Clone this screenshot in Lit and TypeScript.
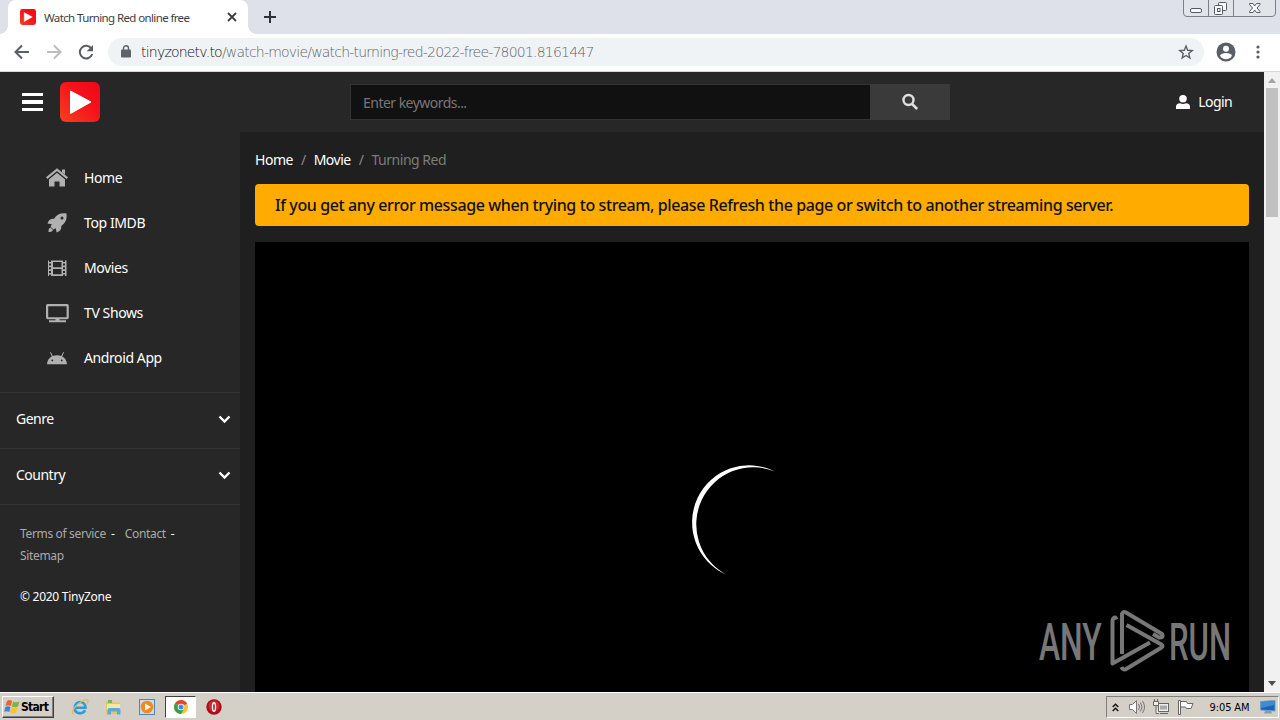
import { LitElement, css, html, svg } from "lit";
import { customElement } from "lit/decorators.js";

const NAV_ITEMS = [
  {
    label: "Home",
    icon: svg`<path d="M4 13 12 6.500l8 6.500V20.500h-5.500v-5h-5v5H4z"/><path d="M1.800 12.500 12 4l10.200 8.500" fill="none" stroke="#272727" stroke-width="4.200"/><path d="M1.700 12.200 12 3.700l10.300 8.500" fill="none" stroke="#b0b0b0" stroke-width="2.200"/><path d="M17 3.600h3v5l-3-2.400z"/>`,
  },
  {
    label: "Top IMDB",
    icon: svg`<path d="M21.500 2.500c.7 6-1 9.400-5.200 12.500.2 3.600-1.300 5.500-4.700 6.600l-.8-4.400-2.400 1.300-2.800-2.800 1.200-2.400-4.400-.8c1-3.400 3-5 6.600-4.800C12 3.600 15.500 1.800 21.500 2.500z"/><path d="M5.500 16.500c-1.900.8-2 2.600-2 4.500 1.900 0 3.800-.2 4.500-2z"/><circle cx="17" cy="7" r="1.500" fill="#272727"/>`,
  },
  {
    label: "Movies",
    icon: svg`<path fill-rule="evenodd" d="M3 4.500h1V6h2V4.500h12V6h2V4.500h1.500V20H20v-1.500h-2V20H6v-1.500H4V20H3zM4 7.500v2h2v-2zm0 3.700v2h2v-2zm0 3.700v2h2v-2zM18 7.500v2h2v-2zm0 3.700v2h2v-2zm0 3.700v2h2v-2zM8 6v5.300h8.500V6zm0 7v5.300h8.500V13z"/>`,
  },
  {
    label: "TV Shows",
    icon: svg`<path fill-rule="evenodd" d="M2.500 3h19.500a1.800 1.800 0 0 1 1.800 1.800v11.700A1.800 1.800 0 0 1 22 18.300H2.800A1.800 1.800 0 0 1 1 16.500V4.800A1.800 1.800 0 0 1 2.500 3zm.7 2.200v11h18.400v-11z"/><path d="M10.500 18h4v1.200H21V21.200H4v-2h6.500z"/>`,
  },
  {
    label: "Android App",
    icon: svg`<path fill-rule="evenodd" d="M2 18.300c.2-3.600 2-6.300 4.800-7.800L5 6.300l.8-.4 2 4.200c2.800-1.200 5.700-1.200 8.400 0l2-4.200.8.400-1.800 4.200c2.800 1.500 4.600 4.200 4.800 7.800zm5.300-4.800a.9.900 0 1 0 0 1.800.9.900 0 0 0 0-1.800zm9.400 0a.9.900 0 1 0 0 1.800.9.900 0 0 0 0-1.800z"/>`,
  },
];

const playLogo = (size: number) => html`
  <svg width=${size} height=${size} viewBox="0 0 40 40">
    <defs>
      <linearGradient id="logo" x1="0" y1="1" x2="1" y2="0">
        <stop offset="0" stop-color="#f8401c"></stop>
        <stop offset=".6" stop-color="#f6101c"></stop>
        <stop offset="1" stop-color="#ee0818"></stop>
      </linearGradient>
    </defs>
    <rect width="40" height="40" rx="6" fill="url(#logo)"></rect>
    <path d="M10.500 9v22.500L31 20z" fill="#fff" stroke="#fff" stroke-linejoin="round"></path>
  </svg>
`;

@customElement("browser-chrome")
export class BrowserChrome extends LitElement {
  override render() {
    return html`
      <div class="tabs">
        <div class="tab">
          ${playLogo(16)}
          <span class="title">Watch Turning Red online free</span>
          <svg width="10" height="10" viewBox="0 0 10 10"><path d="m1 1 8 8M9 1 1 9" stroke="#3c4043" stroke-width="1.800"/></svg>
        </div>
        <svg class="new-tab" width="12" height="12" viewBox="0 0 12 12"><path d="M6 0v12M0 6h12" stroke="#2c3038" stroke-width="2"/></svg>
        <svg class="window-buttons" width="94" height="18" viewBox="0 0 94 18" fill="none" stroke="#7b8088">
          <path d="M.5 0v13q0 3.500 3.500 3.500h85q3.500 0 3.500-3.500V0M25.500 0v16M50.500 0v16" fill="#e1e4e9"/>
          <rect x="7.500" y="8.500" width="11" height="4" rx="1.500" stroke="#555b66" fill="#f8f9fb"/>
          <g stroke="#555b66" fill="#f8f9fb"><rect x="35.500" y="2.500" width="8" height="8" rx="1"/><rect x="31.500" y="5.500" width="8" height="9" rx="1"/><rect x="34.500" y="8.500" width="2.500" height="3"/></g>
          <path d="M66.500 3.500h3.500l1.700 2.500 1.800-2.500h3.500v1L74 8l3 3.500v1h-3.500L71.700 10 70 12.500h-3.500v-1l3-3.500-3-3.500z" stroke="#555b66" fill="#f8f9fb"/>
        </svg>
      </div>
      <div class="toolbar">
        <svg class="nav" width="16" height="16" viewBox="0 0 16 16" fill="none" stroke="#5a5e63" stroke-width="2"><path d="M15 8H2M8 1.500 1.500 8 8 14.500"/></svg>
        <svg class="nav" width="16" height="16" viewBox="0 0 16 16" fill="none" stroke="#babcbe" stroke-width="2"><path d="M1 8h13M8 1.500 14.500 8 8 14.500"/></svg>
        <svg class="nav" width="16" height="16" viewBox="0 0 16 16"><path d="M13.400 4.600A6.300 6.300 0 1 0 14.200 10" fill="none" stroke="#5a5e63" stroke-width="2"/><path d="M15 1v6.300H8.700z" fill="#5a5e63"/></svg>
        <div class="address">
          <svg width="10" height="13" viewBox="0 0 10 13"><rect y="4.500" width="10" height="8" rx="1" fill="#5f6368"/><path d="M2.500 5V3.200a2.500 2.500 0 0 1 5 0V5" fill="none" stroke="#5f6368" stroke-width="1.400"/></svg>
          <span class="url"><b>tinyzonetv.to</b>/watch-movie/watch-turning-red-2022-free-78001.8161447</span>
          <svg width="16" height="16" viewBox="0 0 24 24"><path d="m12 3 2.500 6.400 6.900.5-5.300 4.400 1.700 6.700-5.800-3.700L6.200 21l1.700-6.700-5.300-4.400 6.900-.5z" fill="none" stroke="#5a5e63" stroke-width="2"/></svg>
        </div>
        <svg class="profile" width="20" height="20" viewBox="0 0 20 20"><circle cx="10" cy="10" r="9.500" fill="#5a5e66"/><circle cx="10" cy="6.700" r="3" fill="#fff"/><path d="M4 13.800c1-3.700 11-3.700 12 0a7 7 0 0 1-12 0z" fill="#fff"/></svg>
        <svg width="4" height="14" viewBox="0 0 4 14" fill="#5a5e63"><circle cx="2" cy="2" r="1.600"/><circle cx="2" cy="7" r="1.600"/><circle cx="2" cy="12" r="1.600"/></svg>
      </div>
    `;
  }

  static override styles = css`
    :host { display: block; height: 72px; font-family: "Liberation Sans", sans-serif; }
    svg { display: block; flex: none; }
    .tabs { display: flex; height: 34px; background: #dee1e9; }
    .tab {
      position: relative;
      display: flex; align-items: center;
      box-sizing: border-box;
      width: 240px; margin-left: 8px; padding: 0 11px 0 12px;
      background: #fff;
      border-radius: 8px 8px 0 0;
    }
    /* outward curves at the tab's feet */
    .tab::before, .tab::after {
      content: "";
      position: absolute; bottom: 0;
      width: 8px; height: 8px;
    }
    .tab::before { left: -8px; background: radial-gradient(circle at 0 0, transparent 7.500px, #fff 8px); }
    .tab::after { right: -8px; background: radial-gradient(circle at 100% 0, transparent 7.500px, #fff 8px); }
    .title { flex: 1; margin-left: 8px; font: 11.500px "Noto Sans", sans-serif; letter-spacing: -.62px; white-space: nowrap; color: #3c4043; }
    .new-tab { margin: 11px 0 0 16px; }
    .window-buttons { margin: 0 3px 0 auto; }

    .toolbar {
      display: flex; align-items: center;
      box-sizing: border-box;
      height: 38px; padding: 0 20px 2px 14px;
      background: #fff;
      border-bottom: 1px solid #d5d7da;
    }
    .nav { margin-right: 16px; }
    .nav:nth-child(3) { margin-right: 14px; }
    .address {
      display: flex; flex: 1; align-items: center;
      box-sizing: border-box;
      height: 28px; padding: 0 10px 0 13px;
      border-radius: 14px;
      background: #f0f3f5;
    }
    .url { flex: 1; margin-left: 10px; font: 14px "DejaVu Sans", sans-serif; font-weight: 200; letter-spacing: -.79px; white-space: nowrap; color: #5f6368; }
    .url b { font-weight: inherit; color: #101114; }
    .profile { margin: 0 20px 0 12px; }
  `;
}

@customElement("site-header")
export class SiteHeader extends LitElement {
  override render() {
    return html`
      <div class="burger"><i></i><i></i><i></i></div>
      ${playLogo(40)}
      <div class="search">
        <span class="field">Enter keywords...</span>
        <span class="submit">
          <svg width="18" height="18" viewBox="0 0 18 18" fill="none" stroke="#e0e0e0"><circle cx="7.500" cy="7" r="5" stroke-width="2.400"/><path d="m11 10.800 5.200 5.200" stroke-width="2.600"/></svg>
        </span>
      </div>
      <div class="login">
        <svg width="14" height="14" viewBox="0 0 14 14" fill="#fff"><ellipse cx="7" cy="3.700" rx="3.800" ry="3.700"/><path d="M0 14v-2.200C0 9.500 1.500 8.500 4 8.200c2 1 4 1 6 0 2.500.3 4 1.300 4 3.600V14z"/></svg>
        <span>Login</span>
      </div>
    `;
  }

  static override styles = css`
    :host {
      display: flex; align-items: center;
      box-sizing: border-box;
      height: 60px; padding: 0 32px 0 22px;
      background: #272727;
      font: 14px "Noto Sans", sans-serif;
      color: #fff;
    }
    svg { flex: none; }
    .burger { display: flex; flex-direction: column; gap: 4px; width: 21px; margin-right: 17px; }
    .burger i { height: 3px; background: #fff; }
    .burger i:nth-child(2) { height: 4px; }
    .search { display: flex; width: 600px; height: 36px; margin-left: 250px; }
    .field {
      flex: 1;
      box-sizing: border-box;
      padding-left: 12px;
      border: 1px solid #343434; border-right: 0;
      background: #111;
      color: #77777a;
      line-height: 36px;
      letter-spacing: -.53px;
    }
    .submit { display: flex; align-items: center; justify-content: center; width: 80px; background: #3a3a3a; }
    .login { display: flex; align-items: center; gap: 8px; margin-left: auto; }
    .login span { margin-top: -1px; letter-spacing: -.6px; }
  `;
}

@customElement("site-sidebar")
export class SiteSidebar extends LitElement {
  override render() {
    return html`
      <nav>
        ${NAV_ITEMS.map((item) => html`
          <a><svg width="24" height="24" viewBox="0 0 24 24" fill="#b0b0b0">${item.icon}</svg><span>${item.label}</span></a>
        `)}
      </nav>
      ${["Genre", "Country"].map((name) => html`
        <div class="group">
          <span>${name}</span>
          <svg width="13" height="9" viewBox="0 0 13 9"><path d="m1.500 1.500 5 5 5-5" fill="none" stroke="#fff" stroke-width="2.300"/></svg>
        </div>
      `)}
      <footer>
        <div class="links"><span>Terms of service</span><i>-</i><span>Contact</span><i>-</i><br><span>Sitemap</span></div>
        <div class="copyright">© 2020 TinyZone</div>
      </footer>
    `;
  }

  static override styles = css`
    :host { display: block; width: 240px; flex: none; background: #272727; font: 14px "Noto Sans", sans-serif; color: #fff; }
    nav { padding: 23px 0 12px; border-bottom: 1px solid #333; }
    a { display: flex; align-items: center; height: 45px; padding-left: 45px; }
    a span { margin-left: 15px; letter-spacing: -.4px; }
    .group {
      display: flex; align-items: center; justify-content: space-between;
      height: 55px; padding: 0 9px 0 16px;
      border-bottom: 1px solid #333;
      letter-spacing: -.5px;
    }
    .group span { margin-top: -4px; }
    .group svg { margin-top: -2px; }
    footer { padding: 18px 20px; font-size: 12px; line-height: 22px; }
    .links span { color: #aaa; letter-spacing: -.34px; }
    .links i { margin: 0 10px 0 5px; font-style: normal; }
    .copyright { margin-top: 19px; letter-spacing: -.27px; }
  `;
}

@customElement("watch-page")
export class WatchPage extends LitElement {
  override render() {
    return html`
      <div class="crumbs"><span>Home</span><i>/</i><span>Movie</span><i>/</i><em>Turning Red</em></div>
      <div class="notice">If you get any error message when trying to stream, please Refresh the page or switch to another streaming server.</div>
      <div class="player">
        <svg class="spinner" width="120" height="120" viewBox="690 463 120 120"><path d="M775 471.500A57.050 57.050 0 1 0 726 574.500A57.120 57.120 0 0 1 775 471.500z" fill="#fff"/></svg>
        <svg class="watermark" width="200" height="70" viewBox="1035 606 200 70">
          <g fill="#777" font-family="Roboto, sans-serif" font-size="51" font-weight="500">
            <text transform="translate(1039 659.500) scale(.64 1)" textLength="98" lengthAdjust="spacingAndGlyphs">ANY</text>
            <text transform="translate(1169 659.500) scale(.64 1)" textLength="97" lengthAdjust="spacingAndGlyphs">RUN</text>
          </g>
          <g fill="none" stroke="#777" stroke-width="4" stroke-linejoin="round">
            <path d="M1116.500 619.500q-1-3-2.800-1.500-1.200 1-1.200 3V663.500l37.500-21"/>
            <path d="M1122 654v-40q1-3 4-1.500l36 21.500q2 4-3 3.500l-6-3.500"/>
            <path d="m1126.500 625 35 19.500q2 1.500 0 3L1127 668.500q-4 2.500-5.500-1.500"/>
          </g>
        </svg>
      </div>
    `;
  }

  static override styles = css`
    :host {
      display: flex; flex-direction: column; flex: 1;
      box-sizing: border-box;
      padding: 17px 15px 0;
      background: #1f1f1f;
      font: 14px "Noto Sans", sans-serif;
      color: #fff;
    }
    .crumbs { height: 35px; line-height: 22px; letter-spacing: -.48px; }
    .crumbs i { margin: 0 8px; font-style: normal; color: #888; }
    .crumbs em { font-style: normal; color: #7c7c7c; }
    .notice {
      height: 42px; padding: 0 20px; margin-bottom: 16px;
      border-radius: 4px;
      background: #ffab00;
      color: #111;
      font-size: 16px; font-weight: 500; line-height: 42px; letter-spacing: -.39px;
      white-space: nowrap;
    }
    .player { position: relative; flex: 1; background: #000; }
    .spinner { position: absolute; left: 435px; top: 221px; }
    .watermark { position: absolute; left: 780px; top: 364px; }
  `;
}

@customElement("task-bar")
export class TaskBar extends LitElement {
  override render() {
    return html`
      <div class="start">
        <svg width="17" height="16" viewBox="0 0 17 16"><path d="M3 2c2-1.500 3.500-1 5 0L6.800 7C5 6 3.500 6 1.500 7z" fill="#e8642a"/><path d="M9 2.500c2 1 4 1 6.500 0L14 7.500c-2 1-4 1-6.200 0z" fill="#7fb53b"/><path d="M1.300 8c2-1 3.500-1 5.200 0l-1.200 5c-2-1-3.500-1-5 0z" fill="#3b86d2"/><path d="M7.500 8.500c2 1 4 1 6.200 0l-1.500 5c-2 1-4 1-6 0z" fill="#fbc02d"/></svg>
        <span>Start</span>
      </div>
      <svg class="ie" width="18" height="18" viewBox="0 0 18 18" fill="none"><path d="M4.200 9.700h10.300c0-7.700-10.700-7.500-10.700.2 0 6.600 8.200 6.600 10.200 2.300" stroke="#2e9bdc" stroke-width="2.600"/><path d="M2.500 16.500C-1.500 13 8 3 16 1.500c1.500.5 1 2.500.3 4" stroke="#e9b93c" stroke-width="1.200"/></svg>
      <svg class="explorer" width="17" height="16" viewBox="0 0 17 16"><path d="M1 2h6l1 1.500h7V15H1z" fill="#e4c765"/><path d="M3 1h4v3H3z" fill="#74b959"/><path d="M2 5h13v6H2z" fill="#f8e6a2"/><path d="M2.500 15.500V11q0-2 2-2h9q2 0 2 2v4.500H12v-3H6v3z" fill="#5aabd6"/></svg>
      <svg class="media" width="16" height="16" viewBox="0 0 16 16"><rect x=".5" y=".5" width="15" height="15" fill="#c4ddf3" stroke="#4c87bd"/><circle cx="8" cy="8" r="6.300" fill="#f18a1c"/><path d="M6 4.500v7L12 8z" fill="#fff"/></svg>
      <div class="active">
        <svg width="14" height="14" viewBox="0 0 14 14"><circle cx="7" cy="7" r="7" fill="#f6c32c"/><path d="M7 7 .94 3.500a7 7 0 0 1 12.120 0z" fill="#e14335"/><path d="M.94 3.500A7 7 0 0 0 7 14l3-5.300L7 7z" fill="#2da14c"/><circle cx="7" cy="7" r="3.300" fill="#fff"/><circle cx="7" cy="7" r="2.500" fill="#4285f4"/></svg>
      </div>
      <svg class="opera" width="16" height="16" viewBox="0 0 16 16"><ellipse cx="8" cy="8" rx="7.700" ry="7.700" fill="#a80f18"/><ellipse cx="8" cy="7" rx="5.500" ry="5.500" fill="#cc2a32"/><ellipse cx="8" cy="8" rx="2.200" ry="5" fill="#fff"/><ellipse cx="8" cy="8" rx=".8" ry="3.500" fill="#a80f18"/></svg>
      <div class="tray">
        <svg width="7" height="9" viewBox="0 0 7 9" fill="none" stroke="#111" stroke-width="1.400"><path d="m.7 4 2.800-2.800L6.300 4M.7 8l2.800-2.800L6.300 8"/></svg>
        <svg class="sound" width="16" height="14" viewBox="0 0 16 14" fill="#fff" stroke="#777"><path d="M.5 4.500h3l4-4v13l-4-4h-3z"/><path d="M9.500 4q2 3 0 6M11.500 2.500q3 4.500 0 9M13.500 1q4 6 0 12" fill="none"/></svg>
        <svg class="network" width="17" height="16" viewBox="0 0 17 16" fill="#eee" stroke="#666"><rect x="5.500" y="4.500" width="10" height="8"/><path d="M7 6.500h7v4H7z" fill="#aaa" stroke="none"/><path d="M.5 2.500h5v4h-5zM1.500 0v2M4.500 0v2M3 7v7.500h3M7 14.500h8"/></svg>
        <svg class="flag" width="16" height="16" viewBox="0 0 16 16" fill="#fff" stroke="#666"><path d="M.5 1.500h2v14h-2z"/><path d="M2.500 2.500h6l1 2h5.500l-2 5H8.500l-1-1.500h-5z"/></svg>
        <time>9:05 AM</time>
        <svg width="16" height="14" viewBox="0 0 16 14"><path d="M.5 1.500 15 .5V11L.5 10z" fill="#1764b4" stroke="#6f9fc9"/><path d="M1 2 14 1v4L1 8z" fill="#438bd0"/><path d="M5 11h6l1 2.500H4z" fill="#8b9aa8"/></svg>
      </div>
    `;
  }

  static override styles = css`
    :host {
      display: flex; align-items: center;
      box-sizing: border-box;
      height: 28px; padding: 1px 1px 0 2px;
      background: #d4d0c8;
      border-top: 1px solid #fff;
      font-family: "DejaVu Sans Condensed", "DejaVu Sans", sans-serif;
    }
    svg { display: block; flex: none; }
    .start {
      display: flex; align-items: center;
      box-sizing: border-box;
      width: 52px; height: 22px; padding-left: 1px;
      border: 1px solid; border-color: #fff #404040 #404040 #fff;
      box-shadow: inset -1px -1px #808080;
      font: bold 12px "DejaVu Sans Condensed", "DejaVu Sans", sans-serif;
      letter-spacing: -.7px;
    }
    .ie { margin-left: 17px; }
    .explorer { margin-left: 16px; }
    .media { margin-left: 17px; }
    .active {
      display: flex; align-items: center; justify-content: center;
      box-sizing: border-box;
      width: 31px; height: 22px; margin-left: 10px;
      border: 1px solid; border-color: #404040 #fff #fff #404040;
      background: #fff;
    }
    .opera { margin-left: 10px; }
    .tray {
      display: flex; align-items: center;
      box-sizing: border-box;
      width: 173px; height: 22px; margin-left: auto; padding: 0 2px 0 5px;
      border: 1px solid; border-color: #808080 #fff #fff #808080;
    }
    .sound { margin-left: 10px; }
    .network { margin-left: 8px; }
    .flag { margin-left: 8px; }
    time { margin: 0 auto; font-size: 11px; letter-spacing: -.1px; padding-left: 5px; white-space: nowrap; }
  `;
}

@customElement("app-root")
export class AppRoot extends LitElement {
  override render() {
    return html`
      <browser-chrome></browser-chrome>
      <div class="viewport">
        <div class="page">
          <site-header></site-header>
          <div class="content">
            <site-sidebar></site-sidebar>
            <watch-page></watch-page>
          </div>
        </div>
        <div class="scrollbar">
          <svg width="8" height="5" viewBox="0 0 8 5"><path d="m0 5 4-5 4 5z" fill="#a3a3a3"/></svg>
          <div class="thumb"></div>
          <svg width="8" height="5" viewBox="0 0 8 5"><path d="m0 0 4 5 4-5z" fill="#505050"/></svg>
        </div>
      </div>
      <task-bar></task-bar>
    `;
  }

  static override styles = css`
    :host { display: flex; flex-direction: column; width: 1280px; height: 720px; overflow: hidden; }
    .viewport { display: flex; flex: 1; min-height: 0; }
    .page { display: flex; flex-direction: column; flex: 1; }
    .content { display: flex; flex: 1; }
    .scrollbar {
      display: flex; flex-direction: column; align-items: center;
      box-sizing: border-box;
      width: 16px; padding: 6px 0;
      background: #f1f1f1;
    }
    .thumb { width: 12px; height: 129px; margin: 5px 0 auto; background: #c1c1c1; }
  `;
}
